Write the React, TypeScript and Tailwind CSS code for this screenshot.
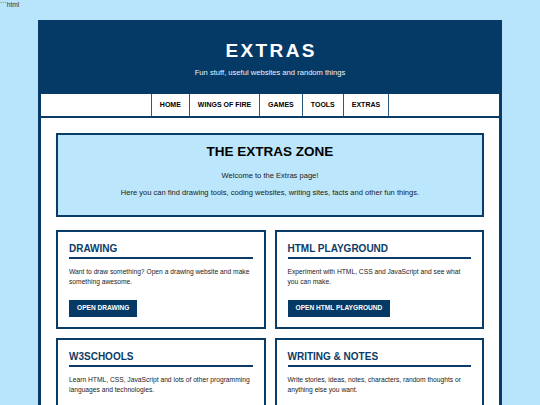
import React from 'react'

const NAV = ['HOME', 'WINGS OF FIRE', 'GAMES', 'TOOLS', 'EXTRAS']

const CARDS: { title: string; text: string; button: string }[] = [
  {
    title: 'DRAWING',
    text: 'Want to draw something? Open a drawing website and make something awesome.',
    button: 'OPEN DRAWING',
  },
  {
    title: 'HTML PLAYGROUND',
    text: 'Experiment with HTML, CSS and JavaScript and see what you can make.',
    button: 'OPEN HTML PLAYGROUND',
  },
  {
    title: 'W3SCHOOLS',
    text: 'Learn HTML, CSS, JavaScript and lots of other programming languages and technologies.',
    button: 'OPEN W3SCHOOLS',
  },
  {
    title: 'WRITING & NOTES',
    text: 'Write stories, ideas, notes, characters, random thoughts or anything else you want.',
    button: 'OPEN WRITING',
  },
]

export default function App() {
  return (
    <div className="min-h-screen bg-[#b8e4fc] font-['Liberation_Sans',Arial,sans-serif]">
      <div className="text-[6.7px] leading-[8px] text-[#333] pt-px">{'```html'}</div>

      <div className="mx-auto mt-[11px] w-[464px] border-[3px] border-b-0 border-[#073a66] bg-white">
        {/* header */}
        <div className="bg-[#063a66] h-[71px] flex flex-col items-center pt-[17px]">
          <h1 className="text-white font-bold text-[19px] leading-[22px] tracking-[2.4px] pl-[2.4px]">EXTRAS</h1>
          <p className="text-[#eef3f8] text-[7.6px] leading-[10px] mt-[5.5px]">
            Fun stuff, useful websites and random things
          </p>
        </div>

        {/* nav */}
        <div className="h-[24px] flex justify-center border-b-2 border-[#0a3c68]">
          {NAV.map((item, i) => (
            <div
              key={item}
              className={`h-full flex items-center px-2 border-l border-[#2d5a7c] text-black font-bold text-[7px] ${
                i === NAV.length - 1 ? 'border-r' : ''
              }`}
            >
              {item}
            </div>
          ))}
        </div>

        {/* main */}
        <div className="p-[15px]">
          <div className="border-2 border-[#0a3c68] bg-[#bce6fb] pt-[9px] pb-[17px] text-center text-[#1a1a1a]">
            <h2 className="text-black font-bold text-[13.5px] leading-[16px]">THE EXTRAS ZONE</h2>
            <p className="text-[7.55px] leading-[11px] mt-[10px]">Welcome to the Extras page!</p>
            <p className="text-[7.55px] leading-[11px] mt-[5.6px]">
              Here you can find drawing tools, coding websites, writing sites, facts and other fun things.
            </p>
          </div>

          <div className="grid grid-cols-2 gap-[9px] mt-[13px]">
            {CARDS.map(c => (
              <div key={c.title} className="border-2 border-[#0a3c68] pt-[11px] px-[11px] pb-[10px]">
                <h3 className="text-[#0d3b66] font-bold text-[10px] leading-[12px] pb-[2px] border-b-2 border-[#0d3b66]">
                  {c.title}
                </h3>
                <p className="mt-[8px] text-[6.7px] leading-[10.7px] text-[#222]">{c.text}</p>
                <div className="mt-[11.6px] flex">
                  <span className="bg-[#063a66] text-white font-bold text-[6.6px] h-[17px] px-[8px] flex items-center">
                    {c.button}
                  </span>
                </div>
              </div>
            ))}
          </div>
        </div>
      </div>
    </div>
  )
}
